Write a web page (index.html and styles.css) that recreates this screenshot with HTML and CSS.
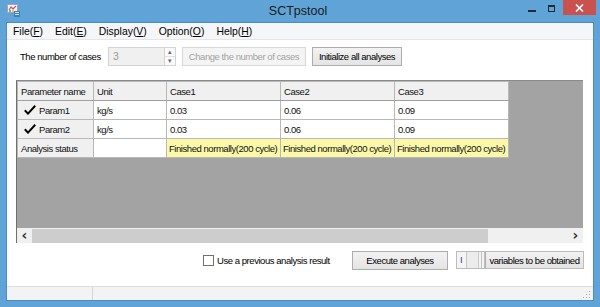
FILE: index.html
```html
<!DOCTYPE html>
<html lang="en">
<head>
    <meta charset="UTF-8">
    <title>SCTpstool</title>
    <link rel="stylesheet" href="styles.css">
</head>
<body>
    <div class="window">
        <div class="titlebar">
            <div class="tb-left">
                <svg class="app-icon" width="13" height="13" viewBox="0 0 13 13">
                    <rect x="0.5" y="0.5" width="10" height="8" fill="#f4f4f4" stroke="#9aa7b4"/>
                    <path d="M2 6 L4 3 L6 5 L9 2" fill="none" stroke="#d04a9a" stroke-width="1.2"/>
                    <rect x="2" y="6" width="2" height="2" fill="#6cc04a"/>
                    <rect x="5" y="5" width="2" height="3" fill="#e8c84a"/>
                    <rect x="7" y="7" width="6" height="6" fill="#3d7fc9"/>
                    <rect x="8" y="8" width="4" height="1" fill="#cfe3f7"/>
                    <rect x="8" y="10" width="4" height="1" fill="#cfe3f7"/>
                </svg>
            </div>
            <div class="title">SCTpstool</div>
            <div class="tb-right">
                <span class="ctl-min"></span>
                <span class="ctl-max"></span>
                <span class="ctl-close">
                    <svg width="9" height="8" viewBox="0 0 9 8">
                        <path d="M1 0.5 L8 7.5 M8 0.5 L1 7.5" stroke="#fff" stroke-width="1.6"/>
                    </svg>
                </span>
            </div>
        </div>

        <div class="client">
            <div class="menubar">
                <span class="menu-item">File(<u>F</u>)</span>
                <span class="menu-item">Edit(<u>E</u>)</span>
                <span class="menu-item">Display(<u>V</u>)</span>
                <span class="menu-item">Option(<u>O</u>)</span>
                <span class="menu-item">Help(<u>H</u>)</span>
            </div>

            <div class="toolbar">
                <label class="cases-label">The number of cases</label>
                <div class="spin">
                    <span class="spin-value">3</span>
                    <span class="spin-btns">
                        <span class="spin-up">&#9652;</span>
                        <span class="spin-down">&#9662;</span>
                    </span>
                </div>
                <button class="btn btn-change" disabled>Change the number of cases</button>
                <button class="btn btn-init">Initialize all analyses</button>
            </div>

            <div class="grid">
                <div class="grid-body">
                    <table class="cases">
                        <colgroup>
                            <col class="col-name">
                            <col class="col-unit">
                            <col class="col-case">
                            <col class="col-case">
                            <col class="col-case">
                        </colgroup>
                        <tr class="head">
                            <td>Parameter name</td>
                            <td>Unit</td>
                            <td>Case1</td>
                            <td>Case2</td>
                            <td>Case3</td>
                        </tr>
                        <tr>
                            <td class="row-head"><svg class="check" width="12" height="10" viewBox="0 0 12 10"><path d="M0.8 5.2 L4 8.6 L11.2 0.8" fill="none" stroke="#000" stroke-width="2"/></svg>Param1</td>
                            <td>kg/s</td>
                            <td>0.03</td>
                            <td>0.06</td>
                            <td>0.09</td>
                        </tr>
                        <tr>
                            <td class="row-head"><svg class="check" width="12" height="10" viewBox="0 0 12 10"><path d="M0.8 5.2 L4 8.6 L11.2 0.8" fill="none" stroke="#000" stroke-width="2"/></svg>Param2</td>
                            <td>kg/s</td>
                            <td>0.03</td>
                            <td>0.06</td>
                            <td>0.09</td>
                        </tr>
                        <tr>
                            <td class="row-head">Analysis status</td>
                            <td></td>
                            <td class="status">Finished normally(200 cycle)</td>
                            <td class="status">Finished normally(200 cycle)</td>
                            <td class="status">Finished normally(200 cycle)</td>
                        </tr>
                    </table>
                </div>
                <div class="hscroll">
                    <span class="sb-arrow">&lsaquo;</span>
                    <span class="sb-thumb"></span>
                    <span class="sb-track"></span>
                    <span class="sb-arrow">&rsaquo;</span>
                </div>
            </div>

            <div class="actions">
                <label class="check-option"><span class="checkbox"></span>Use a previous analysis result</label>
                <button class="btn btn-exec">Execute analyses</button>
                <div class="combo">
                    <span class="combo-text">I</span>
                    <span class="combo-seg"></span>
                    <span class="combo-sep"></span>
                    <span class="combo-sep"></span>
                    <button class="btn btn-vars">variables to be obtained</button>
                </div>
            </div>

            <div class="statusbar">
                <span class="status-panel"></span>
                <span class="status-panel status-grow"></span>
                <svg class="grip" width="8" height="8" viewBox="0 0 8 8">
                    <rect x="6" y="0" width="1" height="1" fill="#a8a8a8"/>
                    <rect x="3" y="3" width="1" height="1" fill="#a8a8a8"/>
                    <rect x="6" y="3" width="1" height="1" fill="#a8a8a8"/>
                    <rect x="0" y="6" width="1" height="1" fill="#a8a8a8"/>
                    <rect x="3" y="6" width="1" height="1" fill="#a8a8a8"/>
                    <rect x="6" y="6" width="1" height="1" fill="#a8a8a8"/>
                </svg>
            </div>
        </div>
    </div>
</body>
</html>
```

FILE: styles.css
```css
:root {
    --ui-font: "Liberation Sans", Arial, sans-serif;
    --frame: #5fa3d7;
    --frame-edge: #4a8cc5;
    --grid-line: #b8b8b8;
    --work-bg: #a3a3a3;
}

* {
    margin: 0;
    padding: 0;
    box-sizing: border-box;
}

body {
    width: 600px;
    height: 307px;
    overflow: hidden;
    background-color: var(--frame);
    font-family: var(--ui-font);
    font-size: 9.5px;
    letter-spacing: -0.45px;
    color: #000;
}

.window {
    height: 307px;
    display: flex;
    flex-direction: column;
}

/* title bar */
.titlebar {
    height: 23px;
    display: grid;
    grid-template-columns: 1fr auto 1fr;
    align-items: start;
    padding-right: 4px;
}

.tb-left {
    padding: 4px 0 0 7px;
}

.app-icon {
    display: block;
}

.title {
    font-size: 12.5px;
    letter-spacing: 0;
    line-height: 23px;
    color: #1a1a1a;
}

.tb-right {
    display: flex;
    justify-content: flex-end;
    align-items: flex-start;
}

.ctl-min {
    width: 8px;
    height: 2px;
    margin-top: 10px;
    margin-right: 12px;
    background-color: #1e2a36;
}

.ctl-max {
    width: 7px;
    height: 7px;
    margin-top: 5px;
    margin-right: 8px;
    border: 1px solid #1e2a36;
    border-top-width: 2px;
}

.ctl-close {
    width: 33px;
    height: 15px;
    background-color: #c9514e;
    display: flex;
    align-items: center;
    justify-content: center;
}

/* client area */
.client {
    margin: 0 7px;
    height: 277px;
    background-color: #fff;
    display: flex;
    flex-direction: column;
    box-shadow: 0 0 0 1px var(--frame-edge);
}

.menubar {
    height: 17px;
    display: flex;
    align-items: center;
    gap: 12px;
    padding-left: 6px;
    background-color: #f5f6f7;
    border-bottom: 1px solid #e6e6e6;
    font-size: 10.4px;
    letter-spacing: 0;
}

.menu-item u {
    text-underline-offset: 1px;
}

.toolbar {
    display: flex;
    align-items: center;
    padding: 7px 0 0 13px;
    height: 26px;
}

.cases-label {
    width: 88px;
    white-space: nowrap;
}

.spin {
    width: 68px;
    height: 19px;
    display: flex;
    border: 1px solid #d4d4d4;
    background-color: #f0f0f0;
}

.spin-value {
    flex: 1;
    padding: 2px 0 0 4px;
    color: #9a9a9a;
    font-size: 10.5px;
}

.spin-btns {
    width: 11px;
    display: flex;
    flex-direction: column;
    border-left: 1px solid #d4d4d4;
    background-color: #fafafa;
    font-size: 7px;
    letter-spacing: 0;
    line-height: 8px;
    text-align: center;
    color: #6a6a6a;
}

.spin-up {
    border-bottom: 1px solid #e2e2e2;
}

.btn {
    height: 19px;
    padding: 0;
    white-space: nowrap;
    font-family: var(--ui-font);
    font-size: 9.5px;
    letter-spacing: -0.45px;
    color: #000;
    background: linear-gradient(#f2f2f2, #e4e4e4);
    border: 1px solid #adadad;
}

.btn-change {
    width: 124px;
    margin-left: 6px;
    color: #a3a3a3;
    background: #f4f4f4;
    border-color: #d9d9d9;
}

.btn-init {
    width: 90px;
    margin-left: 6px;
}

/* data grid */
.grid {
    margin: 14px 10px 0 9px;
    height: 163px;
    display: flex;
    flex-direction: column;
    background-color: var(--work-bg);
    border-left: 1px solid #6f6f6f;
    border-top: 1px solid #8a8a8a;
}

.grid-body {
    flex: 1;
}

.cases {
    width: 491px;
    table-layout: fixed;
    border-collapse: collapse;
}

.col-name {
    width: 76px;
}

.col-unit {
    width: 73px;
}

.col-case {
    width: 114px;
}

.cases td {
    height: 19px;
    padding: 0 3px;
    border: 1px solid var(--grid-line);
    background-color: #fff;
    white-space: nowrap;
    overflow: hidden;
    color: #111;
}

.cases .head td,
.cases .row-head {
    background-color: #f0f0f0;
}

.cases .head td {
    border-bottom-color: #a0a0a0;
}

.cases td.status {
    background-color: #fbf8a9;
    padding-left: 2px;
}

.check {
    vertical-align: -1px;
    margin: 0 3px 0 3px;
}

.hscroll {
    height: 15px;
    display: flex;
    border-top: 1px solid #f0f0f0;
    background-color: #f0f0f0;
}

.sb-arrow {
    width: 15px;
    text-align: center;
    font-family: "DejaVu Sans", sans-serif;
    font-size: 14px;
    font-weight: bold;
    letter-spacing: 0;
    line-height: 12px;
    color: #333;
}

.sb-thumb {
    width: 456px;
    background-color: #cdcdcd;
}

.sb-track {
    flex: 1;
}

/* bottom actions */
.actions {
    display: flex;
    justify-content: flex-end;
    align-items: center;
    padding-right: 9px;
    margin-top: 8px;
    height: 18px;
}

.check-option {
    width: 149px;
    display: flex;
    align-items: center;
    white-space: nowrap;
}

.checkbox {
    width: 11px;
    height: 11px;
    margin-right: 3px;
    border: 1px solid #707070;
    background-color: #fff;
}

.btn-exec {
    width: 96px;
}

.combo {
    width: 128px;
    height: 18px;
    margin-left: 8px;
    display: flex;
    align-items: stretch;
    border: 1px solid #bcbcbc;
    background-color: #f4f4f4;
}

.combo-text {
    width: 9px;
    padding: 2px 0 0 3px;
    color: #4a3a7a;
}

.combo-seg {
    width: 13px;
    border-left: 1px solid #c8c8c8;
    border-right: 1px solid #c8c8c8;
    background-color: #ececec;
}

.combo-sep {
    width: 3px;
    border-right: 1px solid #c0c0c0;
}

.btn-vars {
    flex: 1;
    height: 16px;
    border-width: 0 0 0 1px;
}

/* status bar */
.statusbar {
    margin-top: auto;
    height: 14px;
    display: flex;
    border-top: 1px solid #dcdcdc;
    background-color: #f3f3f3;
}

.status-panel {
    width: 86px;
    border-right: 1px solid #d6d6d6;
}

.status-grow {
    flex: 1;
    border-right: none;
}

.grip {
    align-self: flex-end;
    margin: 0 2px 1px 0;
}
```
